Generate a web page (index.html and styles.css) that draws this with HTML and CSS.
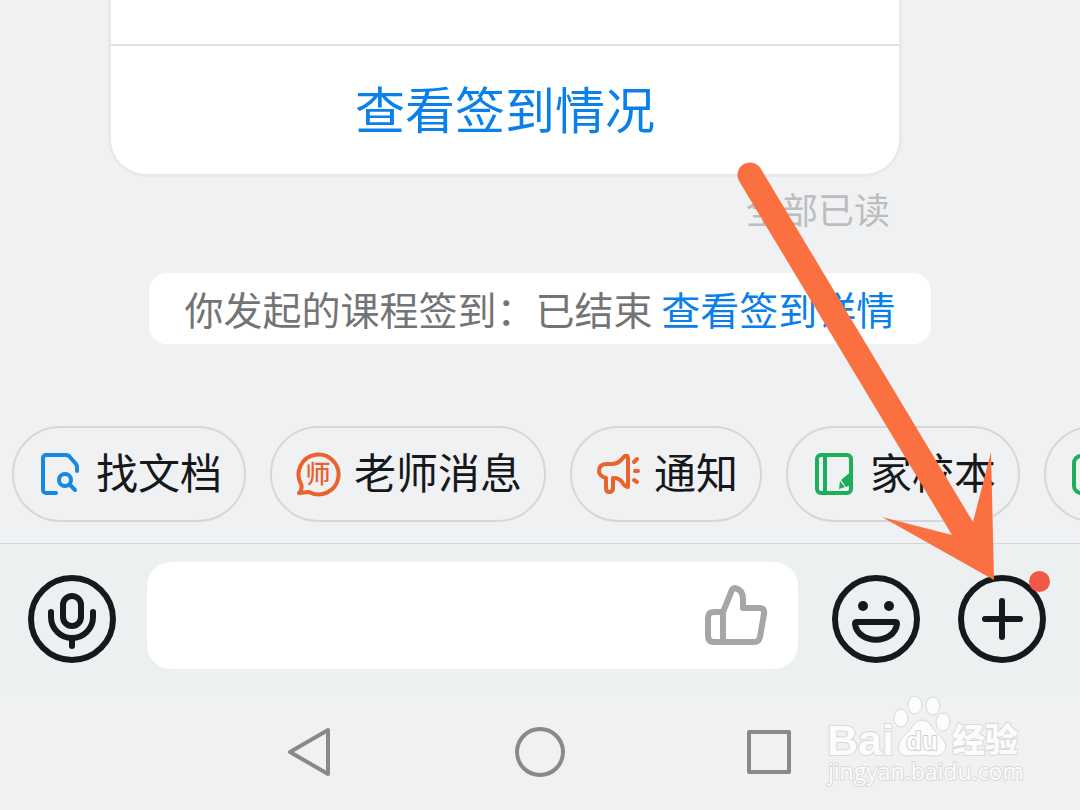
FILE: index.html
```html
<!DOCTYPE html>
<html lang="zh-CN">

<head>
    <meta charset="UTF-8">
    <meta name="viewport" content="width=device-width, initial-scale=1.0">
    <title>课程签到</title>
    <link rel="stylesheet" href="styles.css">
</head>

<body>
    <div class="container">
        <main class="chat">
            <div class="card">
                <div class="card-body"></div>
                <a class="card-link" href="#">查看签到情况</a>
            </div>
            <p class="read">全部已读</p>
            <p class="notice">你发起的课程签到：已结束 <a href="#">查看签到详情</a></p>
        </main>

        <!-- 快捷入口 -->
        <nav class="chips">
            <button class="chip" type="button">
                <svg class="blue" viewBox="0 0 48 48">
                    <path d="M20 43H10a3 3 0 0 1-3-3V8a3 3 0 0 1 3-3h20q2 0 3 1l7 8q1 1 1 3v4" />
                    <circle cx="29" cy="30" r="6" />
                    <path d="M34 35l5 5" />
                </svg>
                <span>找文档</span>
            </button>
            <button class="chip" type="button">
                <svg class="orange" viewBox="0 0 48 48">
                    <path d="M7 34A20 20 0 1 1 15 42L5 43Q9 39 7 34z" />
                    <text x="24" y="33" text-anchor="middle">师</text>
                </svg>
                <span>老师消息</span>
            </button>
            <button class="chip" type="button">
                <svg class="orange" viewBox="0 0 48 48">
                    <path d="M34 8v29q-3 0-6-5-3-4-8-4h-1v10q0 4-4 4-3 0-3-4V28q-7-2-7-7 0-7 8-7h5q5 0 9-4l4-4q3-1 3 2z" />
                    <path d="M40 12l3-3M41 21h3M40 30l3 2" />
                </svg>
                <span>通知</span>
            </button>
            <button class="chip" type="button">
                <svg class="green" viewBox="0 0 48 48">
                    <rect x="7" y="5" width="34" height="38" rx="4" />
                    <path d="M15 5v38" />
                    <path class="fill" d="M43 20v14l-7 3-5-7zM30 31l5 6-6 2z" />
                </svg>
                <span>家校本</span>
            </button>
            <button class="chip" type="button" aria-label="更多">
                <svg class="green" viewBox="0 0 48 48">
                    <rect x="6" y="6" width="36" height="37" rx="7" />
                </svg>
            </button>
        </nav>

        <!-- 输入栏 -->
        <form class="toolbar">
            <button class="round" type="button" aria-label="语音">
                <svg viewBox="0 0 88 88">
                    <circle cx="44" cy="44" r="41" />
                    <rect x="35" y="21" width="18" height="30" rx="9" />
                    <path d="M23 37v5a21 21 0 0 0 42 0v-5M44 63v8" />
                </svg>
            </button>
            <div class="field">
                <input type="text" aria-label="消息">
                <button class="like" type="button" aria-label="点赞">
                    <svg viewBox="0 0 64 64">
                        <path d="M19 28H10q-6 0-6 6v18q0 6 6 6h40q5 0 6-5l4-23q1-6-5-6H39V15q0-9-8-11-2 0-3 2z" />
                        <path d="M19 28v30" />
                    </svg>
                </button>
            </div>
            <button class="round emoji" type="button" aria-label="表情">
                <svg viewBox="0 0 88 88">
                    <circle cx="44" cy="44" r="41" />
                    <circle class="dot" cx="31" cy="31" r="5" />
                    <circle class="dot" cx="57" cy="31" r="5" />
                    <path d="M25 47h38q2 0 2 2c-3 21-39 21-42 0q0-2 2-2z" />
                </svg>
            </button>
            <button class="round" type="button" aria-label="添加">
                <svg viewBox="0 0 88 88">
                    <circle cx="44" cy="44" r="41" />
                    <path d="M27 44h35M44 26v36" />
                </svg>
                <span class="badge"></span>
            </button>
        </form>

        <!-- 系统导航 -->
        <nav class="system">
            <button type="button" aria-label="返回">
                <svg viewBox="0 0 50 50">
                    <path d="M5 25L43 3v44z" />
                </svg>
            </button>
            <button type="button" aria-label="主页">
                <svg viewBox="0 0 50 50">
                    <circle cx="25" cy="25" r="23" />
                </svg>
            </button>
            <button type="button" aria-label="最近任务">
                <svg viewBox="0 0 50 50">
                    <rect x="4" y="5" width="40" height="40" />
                </svg>
            </button>
        </nav>

        <svg class="arrow" viewBox="0 0 260 420">
            <path d="M2 21A12 12 0 0 1 24 9L236 362 254 292 257 420 145 357 215 375z" />
        </svg>

        <svg class="logo" viewBox="0 0 210 110">
            <text class="en" x="7" y="65">Bai</text>
            <ellipse cx="81" cy="28" rx="7" ry="9" />
            <ellipse cx="95" cy="15" rx="7" ry="9" />
            <ellipse cx="113" cy="16" rx="7" ry="9" />
            <ellipse cx="123" cy="32" rx="7" ry="9" />
            <path d="M102 30q6 0 10 7 4 6 9 10c9 9 4 19-5 19-6 0-9-1-14-1s-8 1-14 1c-10 0-13-10-5-19 4-4 6-5 9-10q4-7 10-7z" />
            <text class="du" x="102" y="60" text-anchor="middle">du</text>
            <text class="cn" x="132" y="62">经验</text>
            <text class="site" x="8" y="90">jingyan.baidu.com</text>
        </svg>
    </div>
</body>

</html>
```

FILE: styles.css
```css
* {
    margin: 0;
    padding: 0;
    box-sizing: border-box;
}

body {
    background-color: #f0f1f3;
    font-family: "Noto Sans CJK SC", sans-serif;
    color: #16191b;
}

button {
    border: 0;
    background: none;
    font-family: inherit;
    color: inherit;
    cursor: pointer;
}

a {
    color: #0a80ea;
    text-decoration: none;
}

svg {
    display: block;
    fill: none;
    stroke: currentColor;
    stroke-linecap: round;
    stroke-linejoin: round;
}

.container {
    min-height: 100vh;
    display: flex;
    flex-direction: column;
    position: relative;
    overflow: hidden;
}

.chat {
    flex: 1;
    display: flex;
    flex-direction: column;
}

.card {
    margin: 0 178px 0 108px;
    background-color: #fff;
    border: 3px solid #e7e9eb;
    border-top: 0;
    border-radius: 0 0 38px 38px;
}

.card-body {
    height: 44px;
}

.card-link {
    display: block;
    padding-bottom: 6px;
    border-top: 2px solid #e0e1e3;
    line-height: 122px;
    font-size: 50px;
    text-align: center;
}

.read {
    margin-right: 190px;
    line-height: 62px;
    font-size: 36px;
    text-align: right;
    color: #bcbdbf;
}

.notice {
    align-self: center;
    margin-top: 34px;
    padding: 0 36px;
    line-height: 71px;
    font-size: 39px;
    color: #737476;
    background-color: #fff;
    border-radius: 18px;
    white-space: nowrap;
}

.chips {
    display: flex;
    gap: 24px;
    padding: 0 12px 21px;
    overflow: hidden;
}

.chip {
    flex: none;
    display: flex;
    align-items: center;
    gap: 12px;
    height: 96px;
    padding: 0 22px;
    border: 2px solid #d5d7d9;
    border-radius: 48px;
    font-size: 42px;
    white-space: nowrap;
}

.chip span {
    padding-bottom: 8px;
}

.chip svg {
    width: 48px;
    height: 48px;
    stroke-width: 4;
}

.chip text {
    font-size: 25px;
    font-weight: 500;
    fill: currentColor;
    stroke: none;
}

.chip .fill {
    fill: currentColor;
    stroke: none;
}

.blue {
    color: #1787df;
}

.orange {
    color: #ea632c;
}

.green {
    color: #1cae58;
}

.toolbar {
    display: flex;
    align-items: center;
    padding: 18px 34px 25px 28px;
    border-top: 1px solid #d2d5d7;
    background-color: #ecf0f1;
}

.round {
    flex: none;
    position: relative;
    padding-top: 6px;
}

.round svg {
    width: 88px;
    height: 88px;
    stroke-width: 6;
}

.round .dot {
    fill: currentColor;
    stroke: none;
}

.emoji {
    margin-right: 38px;
}

.badge {
    position: absolute;
    top: 2px;
    right: -4px;
    width: 21px;
    height: 21px;
    border-radius: 50%;
    background-color: #f15846;
}

.field {
    flex: 1;
    min-width: 0;
    display: flex;
    align-items: center;
    height: 107px;
    margin: 0 34px 0 31px;
    padding: 0 30px;
    background-color: #fff;
    border-radius: 24px;
}

.field input {
    flex: 1;
    min-width: 0;
    height: 100%;
    border: 0;
    outline: 0;
    background: none;
    font-size: 42px;
}

.like {
    color: #a5a6a6;
}

.like svg {
    width: 64px;
    height: 64px;
    stroke-width: 6;
}

.system {
    display: flex;
    justify-content: center;
    gap: 180px;
    padding: 33px 0;
    color: #888989;
}

.system svg {
    width: 50px;
    height: 50px;
    stroke-width: 4;
}

.arrow {
    position: absolute;
    left: 737px;
    top: 160px;
    width: 260px;
    height: 420px;
    fill: #fa7040;
    stroke: none;
    pointer-events: none;
}

.logo {
    position: absolute;
    right: 50px;
    bottom: 10px;
    width: 210px;
    height: 110px;
    fill: #fcfcfc;
    stroke: #d8d9da;
    stroke-width: 1;
    pointer-events: none;
}

.logo text {
    paint-order: stroke;
    stroke-width: 2;
}

.logo .en {
    font: 700 43px "Liberation Sans", sans-serif;
}

.logo .du {
    font: 700 26px "Liberation Sans", sans-serif;
    stroke: #cfd0d1;
}

.logo .cn {
    font-size: 33px;
    font-weight: 900;
}

.logo .site {
    font: 400 23px "Open Sans", sans-serif;
}
```
